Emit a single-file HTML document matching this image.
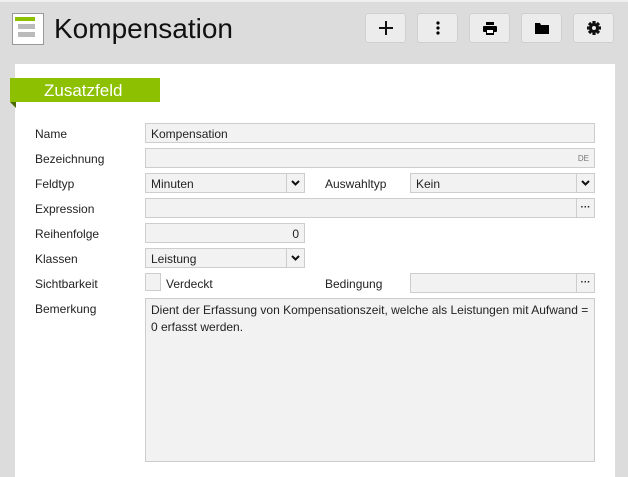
<!DOCTYPE html>
<html><head><style>
body{margin:0;width:628px;height:477px;background:#dcdcdc;font-family:"Segoe UI","Liberation Sans",sans-serif;position:relative;overflow:hidden}
.abs{position:absolute}
.top{left:0;top:0;width:628px;height:2px;background:#f0f0f0}
.panel{left:15px;top:64px;width:600px;height:413px;background:#fff}
.title{left:54px;top:13px;font-size:28px;color:#111}
.btn{top:13px;width:41px;height:30px;background:#ececec;border:1px solid #cfcfcf;border-radius:3px;box-sizing:border-box;display:flex;align-items:center;justify-content:center}
.lbl{left:35px;font-size:12px;color:#222}
.f{background:#f2f2f2;border:1px solid #cdcdcd;box-sizing:border-box;height:20px;font-size:12px;color:#222;padding:2px 5px 0;line-height:16px}
.dd{position:absolute;right:0;top:0;width:17px;height:18px;border-left:1px solid #cdcdcd;display:flex;align-items:center;justify-content:center}
.tag{left:10px;top:78px;width:150px;height:24px;background:#8cc000;color:#fff;font-size:17px;line-height:25px;padding-left:34px;box-sizing:border-box}
</style></head><body>
<div class="abs top"></div>
<div class="abs panel"></div>
<div class="abs" style="left:12px;top:13px;width:32px;height:32px;border:1px solid #999;box-sizing:border-box;background:#fff"></div>
<div class="abs" style="left:15px;top:17px;width:20px;height:4px;background:#8cc000"></div>
<div class="abs" style="left:18px;top:24px;width:17px;height:5px;background:#bbb"></div>
<div class="abs" style="left:18px;top:32px;width:17px;height:5px;background:#bbb"></div>
<div class="abs title">Kompensation</div>
<div class="abs btn" style="left:365px"><svg width="14" height="14"><path d="M7 0v14M0 7h14" stroke="#111" stroke-width="2"/></svg></div>
<div class="abs btn" style="left:417px"><svg width="4" height="14"><circle cx="2" cy="2" r="1.6"/><circle cx="2" cy="7" r="1.6"/><circle cx="2" cy="12" r="1.6"/></svg></div>
<div class="abs btn" style="left:469px"><svg width="14" height="13"><rect x="3" y="0" width="8" height="3"/><rect x="0" y="4" width="14" height="6" rx="1"/><rect x="3" y="8" width="8" height="5"/><rect x="4" y="8" width="6" height="3" fill="#fff"/></svg></div>
<div class="abs btn" style="left:521px"><svg width="14" height="11"><path d="M0 0h5l1 2h8v9H0z"/></svg></div>
<div class="abs btn" style="left:573px"><svg width="14" height="14" viewBox="-7 -7 14 14"><g fill="#111"><circle r="5"/><rect x="-1.6" y="-7" width="3.2" height="14"/><rect x="-7" y="-1.6" width="14" height="3.2"/><rect x="-1.6" y="-7" width="3.2" height="14" transform="rotate(45)"/><rect x="-1.6" y="-7" width="3.2" height="14" transform="rotate(-45)"/></g><circle r="2" fill="#ececec"/></svg></div>
<div class="abs tag">Zusatzfeld</div>
<div class="abs" style="left:10px;top:102px;width:0;height:0;border-top:6px solid #4a6a00;border-left:6px solid transparent"></div>

<div class="abs lbl" style="top:127px">Name</div>
<div class="abs lbl" style="top:152px">Bezeichnung</div>
<div class="abs lbl" style="top:177px">Feldtyp</div>
<div class="abs lbl" style="top:202px">Expression</div>
<div class="abs lbl" style="top:227px">Reihenfolge</div>
<div class="abs lbl" style="top:252px">Klassen</div>
<div class="abs lbl" style="top:277px">Sichtbarkeit</div>
<div class="abs lbl" style="top:302px">Bemerkung</div>
<div class="abs lbl" style="left:325px;top:177px">Auswahltyp</div>
<div class="abs lbl" style="left:325px;top:277px">Bedingung</div>

<div class="abs f" style="left:145px;top:123px;width:450px">Kompensation</div>
<div class="abs f" style="left:145px;top:148px;width:450px;text-align:right;font-size:8px;color:#777;line-height:16px">DE</div>
<div class="abs f" style="left:145px;top:173px;width:160px">Minuten<div class="dd"><svg width="9" height="6"><path d="M1 1l3.5 3.5L8 1" stroke="#111" stroke-width="2" fill="none"/></svg></div></div>
<div class="abs f" style="left:410px;top:173px;width:185px">Kein<div class="dd"><svg width="9" height="6"><path d="M1 1l3.5 3.5L8 1" stroke="#111" stroke-width="2" fill="none"/></svg></div></div>
<div class="abs f" style="left:145px;top:198px;width:450px"><div class="dd" style="font-size:10px;font-weight:bold;line-height:12px">···</div></div>
<div class="abs f" style="left:145px;top:223px;width:160px;text-align:right">0</div>
<div class="abs f" style="left:145px;top:248px;width:160px">Leistung<div class="dd"><svg width="9" height="6"><path d="M1 1l3.5 3.5L8 1" stroke="#111" stroke-width="2" fill="none"/></svg></div></div>
<div class="abs f" style="left:145px;top:273px;width:16px;height:18px;padding:0"></div>
<div class="abs lbl" style="left:166px;top:277px">Verdeckt</div>
<div class="abs f" style="left:410px;top:273px;width:185px"><div class="dd" style="font-size:10px;font-weight:bold;line-height:12px">···</div></div>
<div class="abs f" style="left:145px;top:298px;width:450px;height:164px;padding:3px 5px;line-height:17px">Dient der Erfassung von Kompensationszeit, welche als Leistungen mit Aufwand = 0 erfasst werden.</div>
</body></html>
